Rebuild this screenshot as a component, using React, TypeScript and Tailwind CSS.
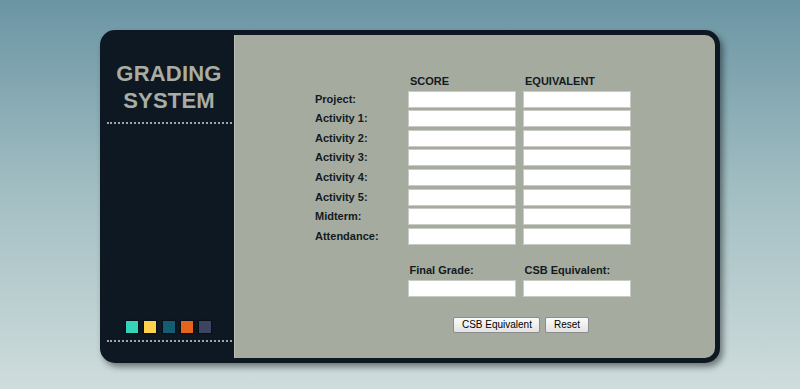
const FONT = "font-['Liberation_Sans',Arial,sans-serif]";

const ROWS = [
  "Project:",
  "Activity 1:",
  "Activity 2:",
  "Activity 3:",
  "Activity 4:",
  "Activity 5:",
  "Midterm:",
  "Attendance:",
];

const SWATCHES = ["bg-[#34d4b9]", "bg-[#fbd24a]", "bg-[#135c73]", "bg-[#e7631c]", "bg-[#3c4560]"];

function Field() {
  return <input type="text" className="h-[17px] w-[108px] bg-white border border-[#c9ccc4] outline-none" />;
}

export default function App() {
  return (
    <div className={`${FONT} w-[800px] h-[389px] bg-[linear-gradient(180deg,#6b95a4_0%,#a3bfc3_50%,#cfdcdc_100%)] pt-[30px] pl-[100px]`}>
      <div className="w-[620px] h-[333px] bg-[#0d1823] rounded-[15px] flex py-[5px] pr-[5px] shadow-[3px_4px_6px_rgba(0,0,0,0.45)]">
        {/* Sidebar */}
        <div className="w-[134px] shrink-0 flex flex-col justify-between pt-[25px] pb-[16px]">
          <div>
            <h1 className="text-[22px] leading-[27px] font-bold tracking-[0.2px] text-[#a9ada2] text-center pl-[4px]">
              GRADING
              <br />
              SYSTEM
            </h1>
            <div className="mt-[8px] ml-[7px] mr-[2px] border-b-2 border-dotted border-[#9ea6a6]" />
          </div>
          <div>
            <div className="flex gap-[6.3px] pl-[26px]">
              {SWATCHES.map((c, i) => (
                <div key={i} className={`w-3 h-3 ${c} shadow-[0_0_1px_1px_rgba(0,0,0,0.35)]`} />
              ))}
            </div>
            <div className="mt-[7px] ml-[7px] mr-[2px] border-b-2 border-dotted border-[#9ea6a6]" />
          </div>
        </div>

        {/* Form panel */}
        <div className="flex-1 bg-[#a6ab9f] rounded-r-[10px] border-l border-[#b9bdb2] pt-[40px]">
          <div className="ml-[80px] w-[316px] grid grid-cols-[86px_108px_108px] gap-x-[7px] gap-y-[2.6px] items-center text-[11px] leading-[13px] font-bold text-[#121a22]">
            <div />
            <div className="pl-[2px]">SCORE</div>
            <div className="pl-[2px]">EQUIVALENT</div>

            {ROWS.map((label) => (
              <div key={label} className="contents">
                <div>{label}</div>
                <Field />
                <Field />
              </div>
            ))}

            <div className="col-span-3 h-[14.4px]" />

            <div />
            <div className="pl-[1.5px]">Final Grade:</div>
            <div className="pl-[1.5px]">CSB Equivalent:</div>

            <div />
            <Field />
            <Field />

            <div />
            <div className="col-span-2 flex justify-center gap-[5px] mt-[17.5px] pl-[3px]">
              <button className="h-[16px] px-[7.5px] text-[10px] leading-[12px] font-normal text-black border border-[#8c8c8c] rounded-[2px] bg-[linear-gradient(180deg,#fbfbfb,#e3e3e3)]">
                CSB Equivalent
              </button>
              <button className="h-[16px] px-[7.5px] text-[10px] leading-[12px] font-normal text-black border border-[#8c8c8c] rounded-[2px] bg-[linear-gradient(180deg,#fbfbfb,#e3e3e3)]">
                Reset
              </button>
            </div>
          </div>
        </div>
      </div>
    </div>
  );
}
